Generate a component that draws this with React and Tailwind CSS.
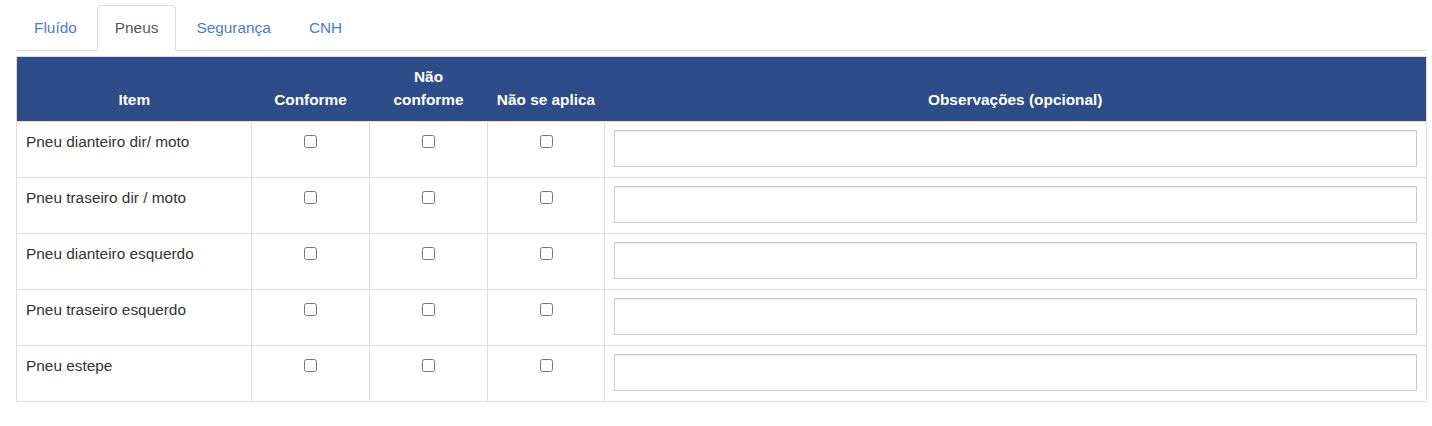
import React, { useState } from 'react';

const tabs = ['Fluído', 'Pneus', 'Segurança', 'CNH'];

const items = [
    'Pneu dianteiro dir/ moto',
    'Pneu traseiro dir / moto',
    'Pneu dianteiro esquerdo',
    'Pneu traseiro esquerdo',
    'Pneu estepe',
];

const App = () => {
    const [active, setActive] = useState('Pneus');

    return (
        <div className="min-h-screen bg-white pl-4 pr-[5px] pt-[5px] text-[15.4px] text-[#333]" style={{ fontFamily: '"Liberation Sans", Arial, sans-serif' }}>
            {/* Tabs */}
            <ul className="flex border-b border-[#ddd]">
                {tabs.map(t => (
                    <li key={t} className="mr-[2px] -mb-px">
                        <button
                            onClick={() => setActive(t)}
                            className={`block px-[17px] py-[11px] leading-[22px] border rounded-t ${t === active ? 'bg-white border-[#ddd] border-b-white text-[#555]' : 'border-transparent text-[#4a7fbf]'}`}
                        >
                            {t}
                        </button>
                    </li>
                ))}
            </ul>

            {/* Checklist table */}
            <table className="mt-[5px] w-full table-fixed border-collapse border border-[#ddd]">
                <colgroup>
                    <col className="w-[235px]" />
                    <col className="w-[118px]" />
                    <col className="w-[118px]" />
                    <col className="w-[117px]" />
                    <col />
                </colgroup>
                <thead>
                    <tr className="h-[65px] bg-[#2e4c87] text-white font-bold">
                        <th className="align-bottom px-2 pb-[10px] leading-[23px] text-center">Item</th>
                        <th className="align-bottom px-2 pb-[10px] leading-[23px] text-center">Conforme</th>
                        <th className="align-bottom px-2 pb-[10px] leading-[23px] text-center">Não<br />conforme</th>
                        <th className="align-bottom px-2 pb-[10px] leading-[23px] text-center">Não se aplica</th>
                        <th className="align-bottom px-2 pb-[10px] leading-[23px] text-center">Observações (opcional)</th>
                    </tr>
                </thead>
                <tbody>
                    {items.map(item => (
                        <tr key={item} className="h-[56px]">
                            <td className="align-top border border-[#ddd] pl-[9px] pr-2 pt-[9px] leading-[22px]">{item}</td>
                            {[0, 1, 2].map(i => (
                                <td key={i} className="align-top border border-[#ddd] text-center pt-[13px]">
                                    <input type="checkbox" className="m-0 w-[13px] h-[13px] align-top" />
                                </td>
                            ))}
                            <td className="align-top border border-[#ddd] px-[9px] pt-2 pb-[10px]">
                                <input type="text" className="block w-full h-[37px] border border-[#ccc] shadow-[inset_0_1px_1px_rgba(0,0,0,0.075)] px-3 outline-none" />
                            </td>
                        </tr>
                    ))}
                </tbody>
            </table>
        </div>
    );
};

export default App;
